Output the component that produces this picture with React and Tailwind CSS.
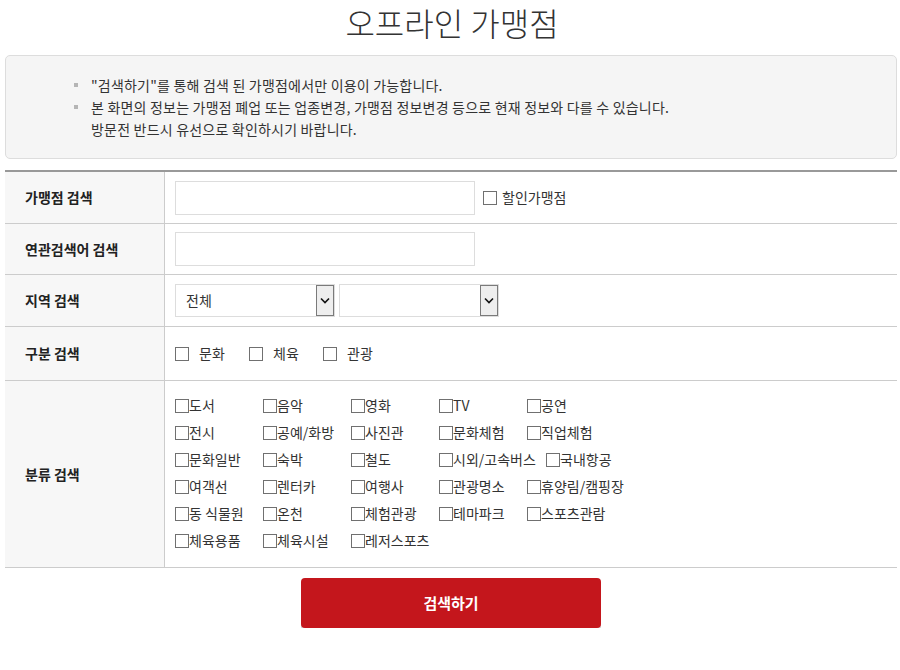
import React from "react";

const font = { fontFamily: '"Noto Sans CJK KR", "Noto Sans", sans-serif' };

const categories = [
  "도서", "음악", "영화", "TV", "공연",
  "전시", "공예/화방", "사진관", "문화체험", "직업체험",
  "문화일반", "숙박", "철도", "시외/고속버스", "국내항공",
  "여객선", "렌터카", "여행사", "관광명소", "휴양림/캠핑장",
  "동 식물원", "온천", "체험관광", "테마파크", "스포츠관람",
  "체육용품", "체육시설", "레저스포츠",
];

const Box = () => (
  <span className="inline-block w-[14px] h-[14px] border border-[#707070] bg-white shrink-0" />
);

const Chevron = () => (
  <span className="w-[18px] h-full flex items-center justify-center bg-[#eeeeee] border border-[#7a7a7a]">
    <svg width="10" height="7" viewBox="0 0 10 7">
      <path d="M1 1.5 L5 5.5 L9 1.5" fill="none" stroke="#111" strokeWidth="1.6" />
    </svg>
  </span>
);

const Select = ({ value }) => (
  <div className="w-[160px] h-[33px] border border-[#dddddd] bg-white flex items-stretch">
    <span className="flex-1 flex items-center pl-[10px] text-[14px] text-[#333]">{value}</span>
    <Chevron />
  </div>
);

const Row = ({ label, children, className = "" }) => (
  <div className={"flex border-b border-[#cccccc] " + className}>
    <div className="w-[160px] shrink-0 bg-[#f7f7f7] border-r border-[#cccccc] flex items-center pl-[20px] text-[14px] font-bold text-[#222]">
      {label}
    </div>
    <div className="flex-1 flex items-center pl-[10px]">{children}</div>
  </div>
);

export default function App() {
  return (
    <div className="w-[900px] bg-white text-[#333]" style={font}>
      <h1 className="pt-[2px] text-center text-[32px] leading-[40px] font-light text-[#333] pl-[4px]">
        오프라인 가맹점
      </h1>

      <div className="mt-[13px] ml-[5px] w-[892px] bg-[#f5f5f5] border border-[#dddddd] rounded-[5px] py-[18px] pl-[68px] text-[14px] leading-[22px] text-[#333] tracking-[0.2px]">
        <div className="flex items-center">
          <span className="w-[4px] h-[4px] bg-[#b5b5b5] mr-[13px]" />
          "검색하기"를 통해 검색 된 가맹점에서만 이용이 가능합니다.
        </div>
        <div className="flex items-center">
          <span className="w-[4px] h-[4px] bg-[#b5b5b5] mr-[13px]" />
          본 화면의 정보는 가맹점 폐업 또는 업종변경, 가맹점 정보변경 등으로 현재 정보와 다를 수 있습니다.
        </div>
        <div className="pl-[17px]">방문전 반드시 유선으로 확인하시기 바랍니다.</div>
      </div>

      <div className="mt-[11px] ml-[5px] w-[892px] border-t-2 border-[#999999]">
        <Row label="가맹점 검색" className="h-[52px]">
          <div className="w-[300px] h-[34px] border border-[#dddddd] bg-white" />
          <label className="ml-[8px] flex items-center gap-[5px] text-[14px] text-[#333]">
            <Box />
            할인가맹점
          </label>
        </Row>
        <Row label="연관검색어 검색" className="h-[51px]">
          <div className="w-[300px] h-[34px] border border-[#dddddd] bg-white" />
        </Row>
        <Row label="지역 검색" className="h-[52px]">
          <div className="flex gap-[4px]">
            <Select value="전체" />
            <Select value="" />
          </div>
        </Row>
        <Row label="구분 검색" className="h-[54px]">
          <div className="flex items-center text-[14px] text-[#333]">
            {["문화", "체육", "관광"].map((t) => (
              <label key={t} className="flex items-center w-[74px]">
                <Box />
                <span className="ml-[10px]">{t}</span>
              </label>
            ))}
          </div>
        </Row>
        <Row label="분류 검색" className="h-[187px]">
          <div className="w-[470px] flex flex-wrap text-[14px] text-[#333] leading-[27px] -mt-[2px]">
            {categories.map((c) => (
              <label
                key={c}
                className={
                  "flex items-center mr-[10px] " +
                  (c === "시외/고속버스" ? "w-[97px]" : "w-[78px]")
                }
              >
                <Box />
                <span className="whitespace-nowrap">{c}</span>
              </label>
            ))}
          </div>
        </Row>
      </div>

      <div className="flex justify-center mt-[10px] pl-[2px]">
        <button className="w-[300px] h-[50px] bg-[#c4161c] rounded-[4px] text-white text-[15px] font-bold shadow-[0_3px_0_#d9d9d9]">
          검색하기
        </button>
      </div>
    </div>
  );
}
